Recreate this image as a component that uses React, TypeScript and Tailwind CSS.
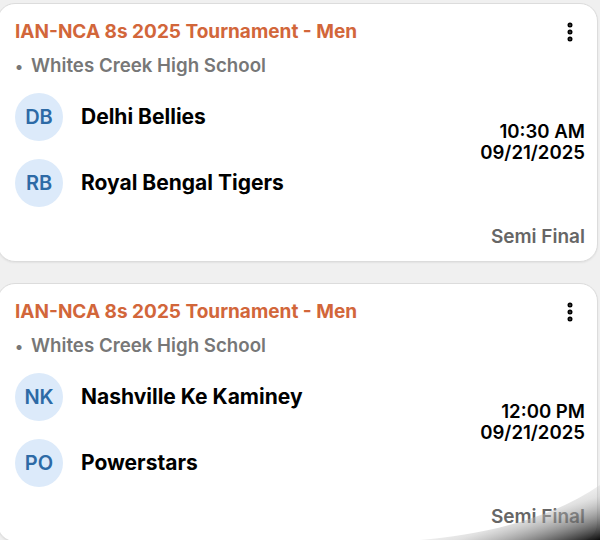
import { EllipsisVertical } from 'lucide-react';

type Match = {
  tournament: string;
  venue: string;
  home: { code: string; name: string };
  away: { code: string; name: string };
  time: string;
  date: string;
  stage: string;
};

const matches: Match[] = [
  {
    tournament: 'IAN-NCA 8s 2025 Tournament - Men',
    venue: 'Whites Creek High School',
    home: { code: 'DB', name: 'Delhi Bellies' },
    away: { code: 'RB', name: 'Royal Bengal Tigers' },
    time: '10:30 AM',
    date: '09/21/2025',
    stage: 'Semi Final',
  },
  {
    tournament: 'IAN-NCA 8s 2025 Tournament - Men',
    venue: 'Whites Creek High School',
    home: { code: 'NK', name: 'Nashville Ke Kaminey' },
    away: { code: 'PO', name: 'Powerstars' },
    time: '12:00 PM',
    date: '09/21/2025',
    stage: 'Semi Final',
  },
];

function TeamRow({ team }: { team: { code: string; name: string } }) {
  return (
    <div className="flex items-center gap-[18px]">
      <div className="flex h-12 w-12 items-center justify-center rounded-full bg-[#dceafa] text-[20px] font-semibold text-[#2d6aa6]">
        {team.code}
      </div>
      <span className="text-[21px] font-bold text-black">{team.name}</span>
    </div>
  );
}

function MatchCard({ match }: { match: Match }) {
  return (
    <div className="-ml-[3px] flex h-[259px] flex-col rounded-[18px] border border-[#dcdcdc] bg-white pl-[17px] pr-[12px] pt-[16px] shadow-[0_1px_2px_rgba(0,0,0,0.06)]">
      {/* Header */}
      <div className="flex items-center justify-between">
        <h2 className="text-[19px] font-bold leading-6 text-[#d2663a]">{match.tournament}</h2>
        <EllipsisVertical className="mr-[3px] h-6 w-6 text-black" strokeWidth={3} />
      </div>
      <p className="mt-[10px] flex items-center text-[18.7px] font-semibold leading-6 text-[#777777]">
        <span className="mr-[8px] text-[16px]">•</span>
        {match.venue}
      </p>

      {/* Teams + schedule */}
      <div className="mt-[15px] flex items-start justify-between">
        <div className="flex flex-col gap-[18px]">
          <TeamRow team={match.home} />
          <TeamRow team={match.away} />
        </div>
        <div className="mt-[28px] flex flex-col items-end text-[18.6px] font-semibold leading-[21px] text-black">
          <span>{match.time}</span>
          <span>{match.date}</span>
        </div>
      </div>

      <div className="mt-[18px] text-right text-[19px] font-semibold leading-6 text-[#666666]">
        {match.stage}
      </div>
    </div>
  );
}

export default function App() {
  return (
    <div
      className="relative h-[540px] w-[600px] overflow-hidden bg-[#f0f0f0] pr-[2px] pt-[3px]"
      style={{ fontFamily: 'Inter, "Noto Sans", sans-serif' }}
    >
      <div className="flex flex-col gap-[21px]">
        {matches.map((m, i) => (
          <MatchCard key={i} match={m} />
        ))}
      </div>

      {/* page curl shading in the corner */}
      <svg className="pointer-events-none absolute bottom-0 right-0" width="180" height="55" viewBox="0 0 180 55">
        <defs>
          <linearGradient id="curl" x1="0.2" y1="0.2" x2="1" y2="1">
            <stop offset="0" stopColor="#ffffff" stopOpacity="0" />
            <stop offset="0.5" stopColor="#bdbdbd" stopOpacity="0.45" />
            <stop offset="1" stopColor="#000000" stopOpacity="0.95" />
          </linearGradient>
        </defs>
        <path d="M0 55 C 60 50, 130 35, 180 0 L 180 55 Z" fill="url(#curl)" />
      </svg>
    </div>
  );
}
